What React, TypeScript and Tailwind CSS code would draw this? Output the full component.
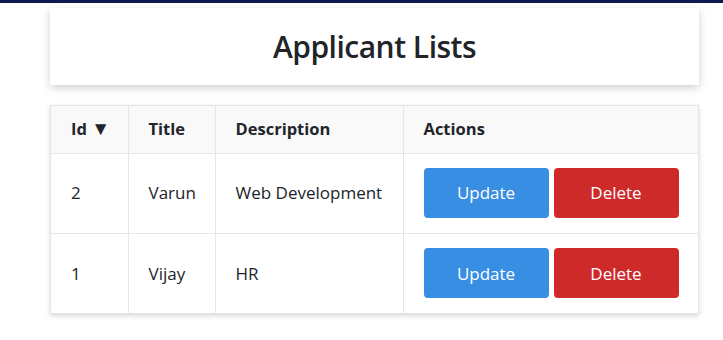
import React from "react";

type Applicant = {
  id: number;
  title: string;
  description: string;
};

const applicants: Applicant[] = [
  { id: 2, title: "Varun", description: "Web Development" },
  { id: 1, title: "Vijay", description: "HR" },
];

const App: React.FC = () => {
  return (
    <div
      className="min-h-screen bg-white text-[#212529]"
      style={{ fontFamily: '"Open Sans", "Noto Sans", sans-serif' }}
    >
      <div className="h-[3px] bg-[#0b1b4d]" />

      <div className="ml-[50px] w-[649px] pt-[5px]">
        {/* header card */}
        <div className="flex h-[77px] items-center justify-center bg-white shadow-[0_3px_8px_rgba(0,0,0,0.18)]">
          <h1 className="text-[30px] font-semibold tracking-[-0.5px]">Applicant Lists</h1>
        </div>

        {/* table */}
        <div className="mt-[20px] border border-[#e3e3e8] shadow-[0_2px_5px_rgba(0,0,0,0.15)]">
          <table className="w-full table-fixed border-collapse text-[17px]">
            <thead>
              <tr className="h-[47px] bg-[#f9f9fa] text-left text-[16.5px]">
                <th className="w-[77px] border-r border-b border-[#e6e6ea] pl-[20px] font-bold">
                  Id <span className="text-[19px] leading-none">▼</span>
                </th>
                <th className="w-[87px] border-r border-b border-[#e6e6ea] pl-[20px] font-bold">Title</th>
                <th className="w-[188px] border-r border-b border-[#e6e6ea] pl-[20px] font-bold">
                  Description
                </th>
                <th className="border-b border-[#e6e6ea] pl-[20px] font-bold">Actions</th>
              </tr>
            </thead>
            <tbody>
              {applicants.map((a, i) => (
                <tr key={a.id} className="h-[80px]">
                  <td
                    className={`border-r border-[#e6e6ea] pl-[20px] ${
                      i < applicants.length - 1 ? "border-b" : ""
                    }`}
                  >
                    {a.id}
                  </td>
                  <td
                    className={`border-r border-[#e6e6ea] pl-[20px] ${
                      i < applicants.length - 1 ? "border-b" : ""
                    }`}
                  >
                    {a.title}
                  </td>
                  <td
                    className={`border-r border-[#e6e6ea] pl-[20px] ${
                      i < applicants.length - 1 ? "border-b" : ""
                    }`}
                  >
                    {a.description}
                  </td>
                  <td
                    className={`border-[#e6e6ea] pl-[20px] ${
                      i < applicants.length - 1 ? "border-b" : ""
                    }`}
                  >
                    <div className="flex gap-[5px]">
                      <button className="h-[50px] w-[125px] rounded-[4px] bg-[#378ee2] text-[17px] text-white">
                        Update
                      </button>
                      <button className="h-[50px] w-[125px] rounded-[4px] bg-[#cf2a2a] text-[17px] text-white">
                        Delete
                      </button>
                    </div>
                  </td>
                </tr>
              ))}
            </tbody>
          </table>
        </div>
      </div>
    </div>
  );
};

export default App;
